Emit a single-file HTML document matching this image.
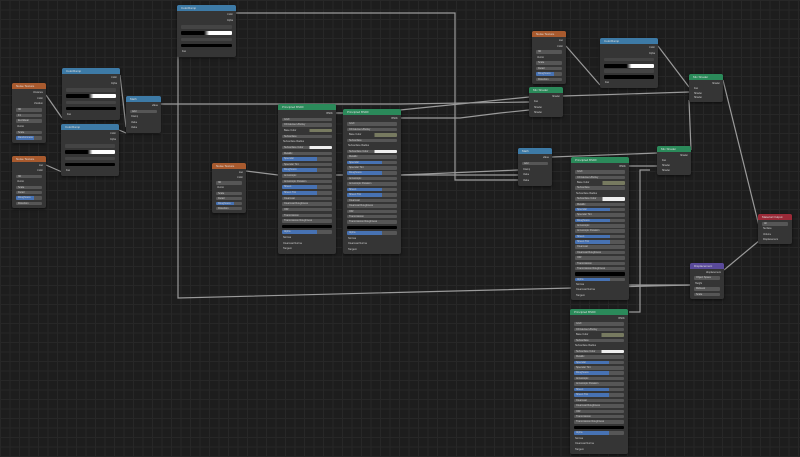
<!DOCTYPE html>
<html><head><meta charset="utf-8"><style>
html,body{margin:0;padding:0}
body{width:800px;height:457px;overflow:hidden;position:relative;
background-color:#1d1d1d;
background-image:linear-gradient(#272727 1px,transparent 1px),linear-gradient(90deg,#272727 1px,transparent 1px);
background-size:9.5px 9.5px;font-family:"Liberation Sans",sans-serif}
.n{position:absolute;background:#353535;border-radius:2px;box-shadow:0 1px 3px rgba(0,0,0,.6);overflow:hidden}
.h{height:6px;font-size:3px;line-height:6px;color:#ddd;padding-left:4px;white-space:nowrap}
.r{position:absolute;height:3.6px;border-radius:1px;font-size:2.5px;line-height:3.6px;color:#ccc;padding-left:2px;box-sizing:border-box;white-space:nowrap;overflow:hidden}
svg{position:absolute;left:0;top:0}
</style></head><body>
<svg width="800" height="457"><g fill="none" stroke="#9a9a9a" stroke-width="1.2">
<polyline points="236,13 455,13 455,180 518,180"/>
<polyline points="178,20 178,298 690,285"/>
<polyline points="161,104 278,104 400,104 529,102"/>
<polyline points="336,113 343,113 400,110 529,97"/>
<polyline points="401,118 460,118 500,113 529,110"/>
<polyline points="246,171 278,175 518,175"/>
<polyline points="120,75 126,127"/>
<polyline points="119,130 126,133"/>
<polyline points="46,95 62,118"/>
<polyline points="46,165 62,172"/>
<polyline points="563,96 689,92"/>
<polyline points="658,46 689,87"/>
<polyline points="566,46 600,85"/>
<polyline points="552,157 657,153"/>
<polyline points="629,166 657,166"/>
<polyline points="650,170 640,170 640,312 629,312"/>
<polyline points="723,80 760,230"/>
<polyline points="691,150 689,100"/>
<polyline points="724,270 760,240"/>
<polyline points="629,285 690,285"/>
<polyline points="401,175 518,170"/>
</g></svg>
<div id="c"></div>
<script>
var H={b:'#3d7aa6',o:'#a85a2e',g:'#2b8a5a',p:'#5a4a9a',r:'#9a2a38'};
var P="o:BSDF|b:GGX|b:Christensen-Burley|c:Base Color|b:Subsurface|i:Subsurface Radius|w:Subsurface Color|b:Metallic|B:Specular|b:Specular Tint|B:Roughness|b:Anisotropic|b:Anisotropic Rotation|B:Sheen|B:Sheen Tint|b:Clearcoat|b:Clearcoat Roughness|b:IOR|b:Transmission|b:Transmission Roughness|k:Emission|B:Alpha|i:Normal|i:Clearcoat Normal|i:Tangent";
var R="o:Color|o:Alpha|x:|g:|x:|k:|i:Fac";
var T="o:Fac|o:Color|b:3D|i:Vector|b:Scale|b:Detail|B:Roughness|b:Distortion";
var M="o:Value|b:Add|i:Clamp|i:Value|i:Value";
var X="o:Shader|i:Fac|i:Shader|i:Shader";
var N=[
[12,83,34,60,'o','Noise Texture',"o:Distance|o:Color|o:Position|b:3D|b:F1|b:Euclidean|i:Vector|b:Scale|B:Randomness"],
[12,156,34,52,'o','Noise Texture',T],
[62,68,58,52,'b','ColorRamp',R],[61,124,58,52,'b','ColorRamp',R],
[126,96,35,37,'b','Math',M],[177,5,59,52,'b','ColorRamp',R],
[212,163,34,50,'o','Noise Texture',T],
[278,104,58,150,'g','Principled BSDF',P],[343,109,58,145,'g','Principled BSDF',P],
[532,31,34,53,'o','Noise Texture',T],[600,38,58,50,'b','ColorRamp',R],
[529,87,34,30,'g','Mix Shader',X],[689,74,34,28,'g','Mix Shader',X],
[518,148,34,38,'b','Math',M],[571,157,58,143,'g','Principled BSDF',P],
[657,146,34,29,'g','Mix Shader',X],[758,214,34,30,'r','Material Output',"b:All|i:Surface|i:Volume|i:Displacement"],
[690,263,34,36,'p','Displacement',"o:Displacement|b:Object Space|i:Height|b:Midlevel|b:Scale"],
[570,309,58,145,'g','Principled BSDF',P]];
var out='';
N.forEach(function(n){
 var x=n[0],y=n[1],w=n[2],h=n[3],rows=n[6].split('|');
 var rh=(h-9)/rows.length;
 out+='<div class="n" style="left:'+x+'px;top:'+y+'px;width:'+w+'px;height:'+h+'px"><div class="h" style="background:'+H[n[4]]+'">'+n[5]+'</div>';
 rows.forEach(function(r,i){
  var t=r[0],lab=r.slice(2),ty=8+i*rh;
  var st='top:'+ty.toFixed(1)+'px;';
  if(t=='o'){out+='<div class="r" style="'+st+'right:3px;text-align:right;padding:0">'+lab+'</div>';}
  else if(t=='i'){out+='<div class="r" style="'+st+'left:3px">'+lab+'</div>';}
  else if(t=='x'){out+='<div class="r" style="'+st+'left:4px;right:4px;background:#444"></div>';}
  else if(t=='g'){out+='<div class="r" style="'+st+'left:4px;right:4px;height:4px;background:linear-gradient(90deg,#000,#000 45%,#fff 55%,#fff)"></div>';}
  else if(t=='k'){out+='<div class="r" style="'+st+'left:4px;right:4px;background:#000"></div>';}
  else if(t=='w'){out+='<div class="r" style="'+st+'left:4px;right:4px;background:linear-gradient(90deg,#565656 55%,#eee 55%)">'+lab+'</div>';}
  else if(t=='c'){out+='<div class="r" style="'+st+'left:4px;right:4px;background:linear-gradient(90deg,#353535 55%,#777a60 55%)">'+lab+'</div>';}
  else if(t=='B'){out+='<div class="r" style="'+st+'left:4px;right:4px;background:linear-gradient(90deg,#4772b3 70%,#565656 70%)">'+lab+'</div>';}
  else {out+='<div class="r" style="'+st+'left:4px;right:4px;background:#565656">'+lab+'</div>';}
 });
 out+='</div>';
});
document.getElementById('c').innerHTML=out;
</script>
</body></html>
